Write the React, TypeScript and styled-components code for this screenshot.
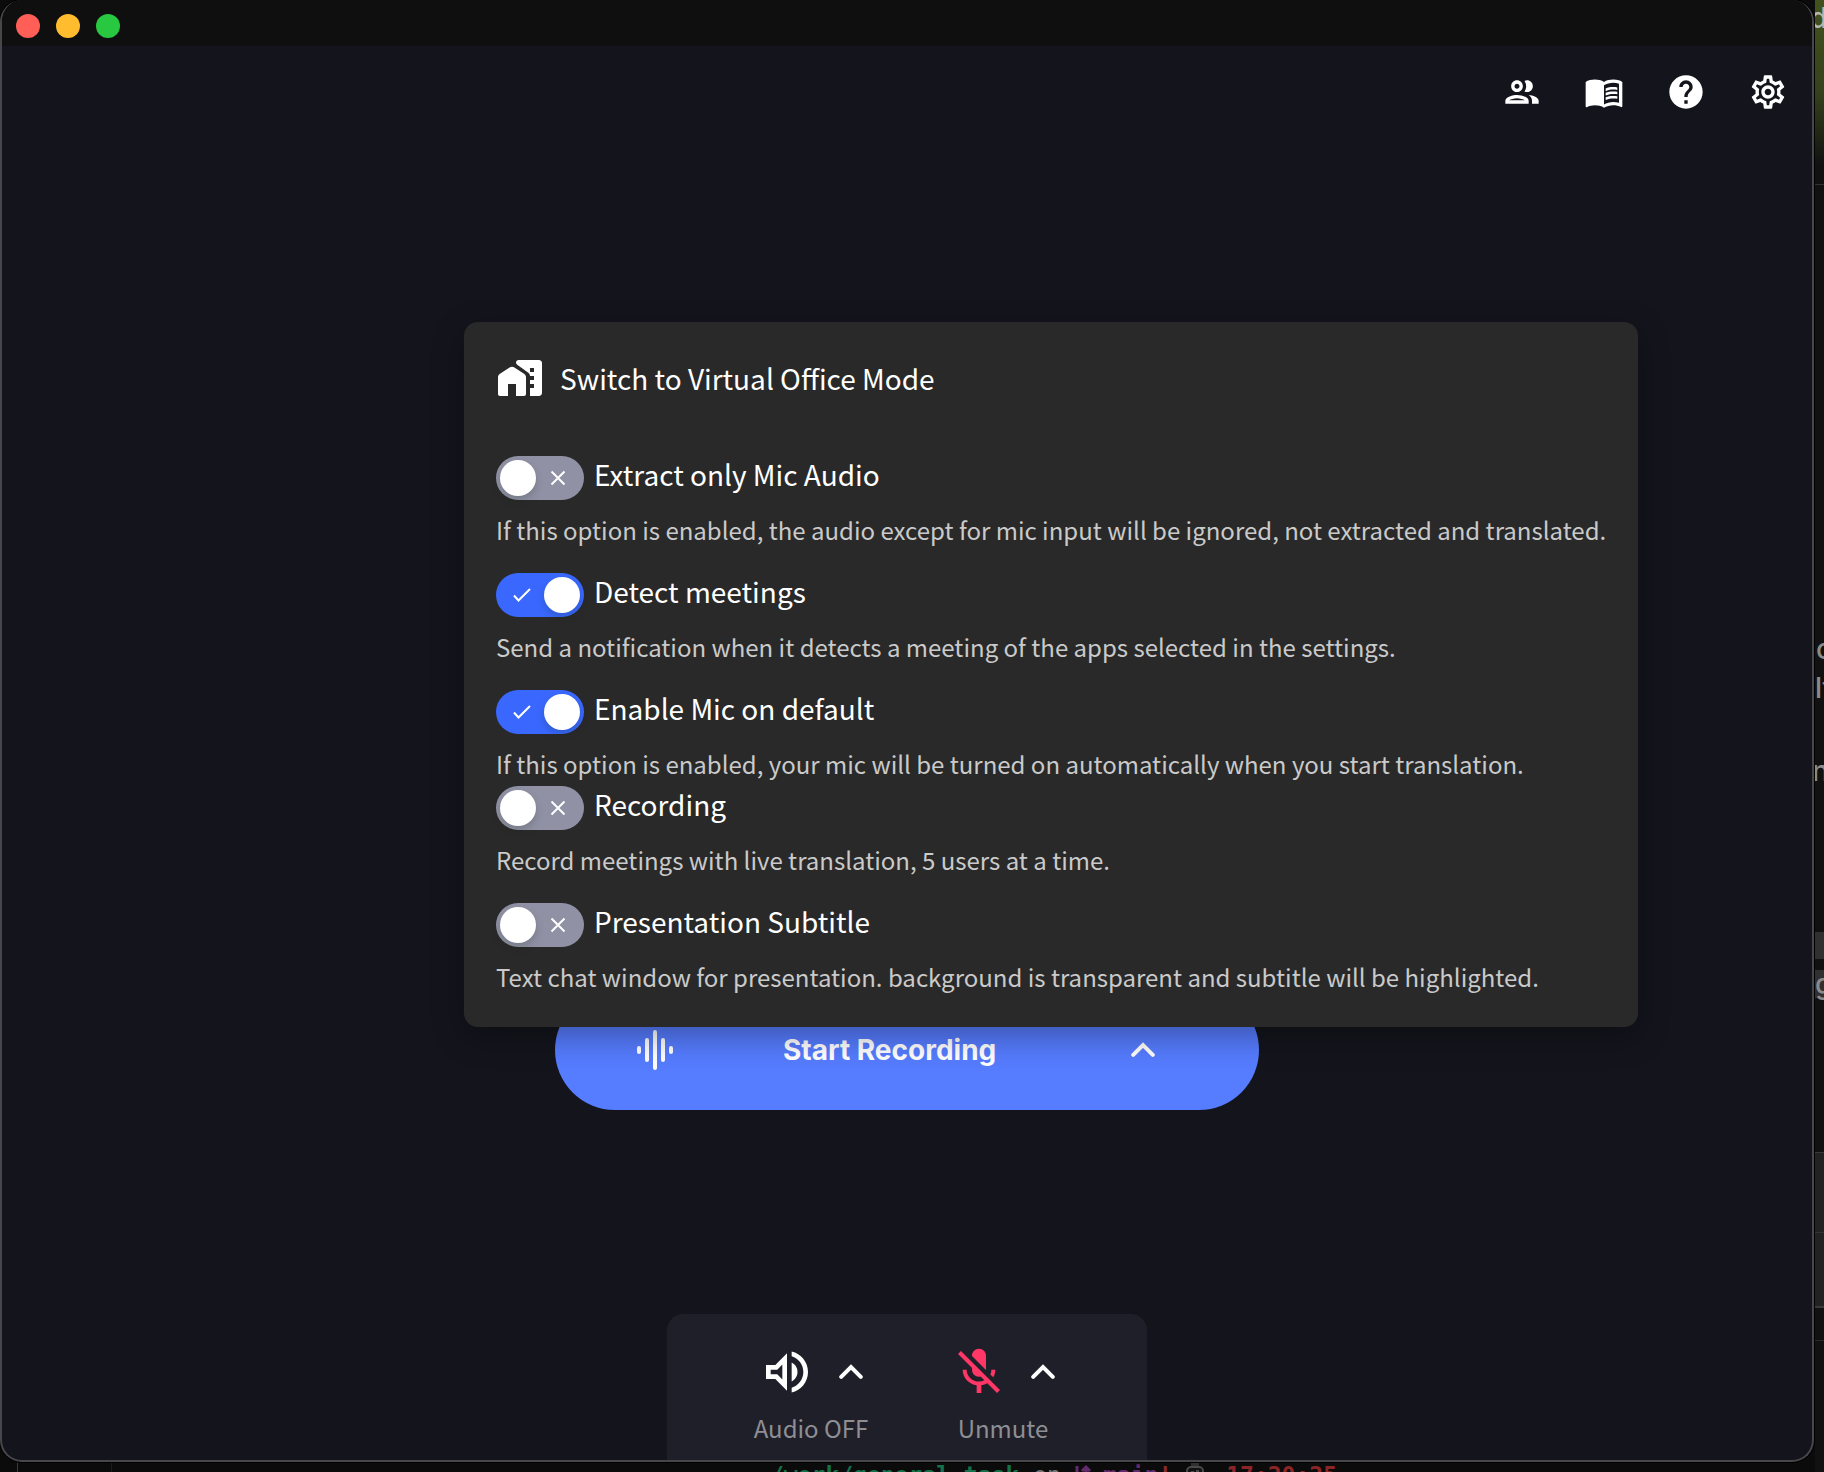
import React, { useId, useState } from "react";
import styled, { createGlobalStyle } from "styled-components";
import {
  MdHelp,
  MdMicOff,
  MdOutlineGroup,
  MdOutlineMenuBook,
  MdOutlineSettings,
  MdOutlineVolumeUp,
} from "react-icons/md";

const color = {
  titleBar: "#0f0f0f",
  window: "#14141d",
  edge: "#47474b",
  popover: "#292929",
  dock: "#1f1f29",
  accent: "#3a68ff",
  record: "#567cff",
  off: "#9191a5",
  danger: "#ff3767",
  muted: "#8e8e93",
  description: "#cacaca",
};

const GlobalStyle = createGlobalStyle`
  *, *::before, *::after { box-sizing: border-box; }
  body {
    margin: 0;
    background: #0b0b0b;
    color: #fff;
    font-family: "Noto Sans CJK JP", "Noto Sans", sans-serif;
  }
  button {
    padding: 0;
    border: 0;
    background: none;
    color: inherit;
    font: inherit;
    cursor: pointer;
  }
  svg { display: block; flex: none; }
`;

const Desktop = styled.div`
  position: relative;
  height: 100vh;
  padding: 0 10px 10px 0;
  overflow: hidden;
  background: #0b0b0b;
`;

/* ---- windows that peek out from behind the app ---- */

const SideWindow = styled.div`
  position: absolute;
  top: 0;
  right: 0;
  bottom: 0;
  width: 9px;
  overflow: hidden;
  background: #111;
  color: #8b8b8b;
  font: 500 28px/32px Inter, sans-serif;
`;

const Wallpaper = styled.div`
  height: 185px;
  background: linear-gradient(#42521f 0, #36421c 50%, #111 90%);
  border-bottom: 1px solid #333;
`;

const SideBlock = styled.div<{ $top: number; $height: number; $fill: string }>`
  position: absolute;
  top: ${(p) => p.$top}px;
  left: 0;
  width: 100%;
  height: ${(p) => p.$height}px;
  background: ${(p) => p.$fill};
`;

const SideText = styled.span<{ $top: number; $left: number; $tone?: string }>`
  position: absolute;
  top: ${(p) => p.$top}px;
  left: ${(p) => p.$left}px;
  color: ${(p) => p.$tone ?? "inherit"};
  white-space: nowrap;
`;

const Terminal = styled.div`
  position: absolute;
  left: 0;
  right: 9px;
  bottom: 0;
  height: 9px;
  overflow: hidden;
`;

const TerminalRule = styled.i<{ $left: number; $tone: string }>`
  position: absolute;
  top: 0;
  left: ${(p) => p.$left}px;
  width: 1px;
  height: 100%;
  background: ${(p) => p.$tone};
`;

const Prompt = styled.div`
  position: absolute;
  top: -2px;
  left: 770px;
  display: flex;
  gap: 14px;
  font: 700 23px/28px "DejaVu Sans Mono", monospace;
  white-space: pre;
`;

const PromptPart = styled.span<{ $tone: string; $light?: boolean }>`
  display: flex;
  color: ${(p) => p.$tone};
  font-weight: ${(p) => (p.$light ? 400 : 700)};
`;

/* ---- app window ---- */

const AppWindow = styled.main`
  position: relative;
  display: flex;
  flex-direction: column;
  height: 100%;
  overflow: hidden;
  background: ${color.window};
  border: 2px solid ${color.edge};
  border-top-width: 0;
  border-radius: 22px;
  box-shadow: 0 0 0 1px #000;
`;

const TitleBar = styled.header`
  display: flex;
  flex: none;
  gap: 16px;
  height: 46px;
  padding: 14px;
  background: ${color.titleBar};
`;

const TrafficLight = styled.button<{ $fill: string }>`
  width: 24px;
  height: 24px;
  border-radius: 50%;
  background: ${(p) => p.$fill};
`;

const Toolbar = styled.nav`
  display: flex;
  justify-content: flex-end;
  gap: 42px;
  padding: 26px 24px;
`;

const Stage = styled.section`
  display: flex;
  flex: 1;
  align-items: flex-end;
  justify-content: center;
  padding-bottom: 204px;
`;

const RecordButton = styled.button`
  display: flex;
  align-items: center;
  width: 704px;
  height: 120px;
  padding: 0 104px 0 76px;
  border-radius: 60px;
  background: ${color.record};
  font: 700 28px/36px Inter, sans-serif;

  span { margin-left: 104px; }
  svg:last-child { margin-left: auto; }
`;

const Dock = styled.footer`
  display: flex;
  flex: none;
  align-self: center;
  justify-content: center;
  gap: 72px;
  width: 480px;
  height: 146px;
  padding-top: 30px;
  border-radius: 16px 16px 0 0;
  background: ${color.dock};
`;

const DockItem = styled.div`
  display: flex;
  flex-direction: column;
  align-items: center;
  gap: 10px;
  width: 120px;
  color: ${color.muted};
  font-size: 24px;
  line-height: 36px;
  white-space: nowrap;
`;

const DockControls = styled.div`
  display: flex;
  align-items: center;
  gap: 24px;
  color: #fff;
`;

const DockButton = styled.button<{ $danger?: boolean }>`
  color: ${(p) => (p.$danger ? color.danger : "#fff")};
`;

/* ---- settings popover ---- */

const Popover = styled.section`
  position: absolute;
  top: 322px;
  left: 462px;
  padding: 32px;
  border-radius: 14px;
  background: ${color.popover};
  box-shadow: 0 10px 32px rgba(0, 0, 0, 0.32);
`;

const ModeButton = styled.button`
  display: flex;
  align-items: center;
  gap: 16px;
  font-size: 28px;
  line-height: 36px;
`;

const OptionList = styled.div`
  display: flex;
  flex-direction: column;
  gap: 4px;
  margin-top: 54px;
`;

const OptionGroup = styled.div`
  display: flex;
  flex-direction: column;
  gap: 25px;
`;

const Option = styled.div`
  display: flex;
  flex-direction: column;
  gap: 12px;
`;

const OptionLabel = styled.label`
  display: flex;
  align-items: flex-start;
  gap: 10px;
  font-size: 28px;
  line-height: 36px;
  cursor: pointer;
`;

const SwitchBox = styled.span`
  position: relative;
  display: flex;
`;

const SwitchInput = styled.input`
  display: flex;
  width: 88px;
  height: 44px;
  margin: 0;
  padding: 4px;
  appearance: none;
  border-radius: 22px;
  background: ${color.off};
  cursor: pointer;

  &::before {
    content: "";
    width: 36px;
    height: 36px;
    border-radius: 50%;
    background: #fff;
    box-shadow: 0 4px 8px rgba(0, 35, 11, 0.2);
  }

  &:checked { background: ${color.accent}; }
  &:checked::before { margin-left: auto; }
`;

const SwitchMark = styled.svg<{ $on: boolean }>`
  position: absolute;
  top: 10px;
  left: ${(p) => (p.$on ? 14 : 50)}px;
  width: 24px;
  height: 24px;
  fill: none;
  stroke: #fff;
  stroke-width: 2;
  pointer-events: none;
`;

const Description = styled.p`
  margin: 0;
  color: ${color.description};
  font-size: 24px;
  line-height: 36px;
  white-space: nowrap;
`;

/* ---- drawings ---- */

const WaveIcon = () => (
  <svg width="48" height="48" viewBox="0 0 24 24" stroke="currentColor" strokeWidth="2" strokeLinecap="round">
    <path d="M4 11v2M8 7v10M12 3v18M16 7v10M20 11v2" />
  </svg>
);

const ChevronUp = () => (
  <svg width="24" height="24" viewBox="6 6 12 12" fill="none" stroke="currentColor" strokeWidth="2" strokeLinecap="round">
    <path d="M7.1 14.4 12 9.5l4.9 4.9" />
  </svg>
);

const HomeWorkIcon = () => (
  <svg width="48" height="48" viewBox="0 0 24 24" fill="currentColor">
    <path d="M1 11.6c0-.6.3-1.2.8-1.6l5-3.2c.7-.5 1.7-.5 2.4 0l5 3.2c.5.4.8 1 .8 1.6V20c0 .6-.4 1-1 1h-4v-6H6v6H2c-.6 0-1-.4-1-1z" />
    <path d="M21.5 3H11.3C10.6 3 10 3.6 10 4.3c0 .4.2.8.6 1.1l5.4 3.9c.6.4 1 1 1 1.7h2v2h-2v2h2v2h-2v4h4.5c.8 0 1.5-.7 1.5-1.5v-15c0-.8-.7-1.5-1.5-1.5zM19 9h-2V7h2z" />
  </svg>
);

const BranchIcon = () => (
  <svg width="28" height="28" viewBox="0 0 28 28" fill="none" stroke="currentColor" strokeWidth="3">
    <path d="M2 5v18M11 24V8M7 10l4-4 4 4" />
  </svg>
);

const WatchIcon = () => (
  <svg width="26" height="28" viewBox="0 0 26 28" fill="currentColor">
    <path d="M5 2h8v5H5z" opacity=".6" />
    <rect x="1" y="6" width="16" height="18" rx="4" fill="#111" stroke="currentColor" strokeWidth="2" />
    <path d="M5 10h3v2H5zM10 9h3v3h-3z" />
  </svg>
);

/* ---- data ---- */

type OptionData = { title: string; text: string; on: boolean };

const groups: OptionData[][] = [
  [
    {
      title: "Extract only Mic Audio",
      text: "If this option is enabled, the audio except for mic input will be ignored, not extracted and translated.",
      on: false,
    },
    {
      title: "Detect meetings",
      text: "Send a notification when it detects a meeting of the apps selected in the settings.",
      on: true,
    },
    {
      title: "Enable Mic on default",
      text: "If this option is enabled, your mic will be turned on automatically when you start translation.",
      on: true,
    },
  ],
  [
    { title: "Recording", text: "Record meetings with live translation, 5 users at a time.", on: false },
    {
      title: "Presentation Subtitle",
      text: "Text chat window for presentation. background is transparent and subtitle will be highlighted.",
      on: false,
    },
  ],
];

const lights = [
  { name: "Close", fill: "#ff5f57" },
  { name: "Minimize", fill: "#febc2e" },
  { name: "Zoom", fill: "#28c840" },
];

const tools = [
  { name: "Members", Icon: MdOutlineGroup },
  { name: "Guide", Icon: MdOutlineMenuBook },
  { name: "Help", Icon: MdHelp },
  { name: "Settings", Icon: MdOutlineSettings },
];

function OptionRow({ title, text, on }: OptionData) {
  const id = useId();
  const [checked, setChecked] = useState(on);
  return (
    <Option>
      <OptionLabel htmlFor={id}>
        <SwitchBox>
          <SwitchInput
            id={id}
            type="checkbox"
            role="switch"
            checked={checked}
            onChange={(e) => setChecked(e.target.checked)}
          />
          <SwitchMark $on={checked} viewBox="0 0 24 24" aria-hidden="true">
            <path d={checked ? "M4 12.5l4.5 5L20 6" : "M5.5 5.5l13 13M18.5 5.5l-13 13"} />
          </SwitchMark>
        </SwitchBox>
        {title}
      </OptionLabel>
      <Description>{text}</Description>
    </Option>
  );
}

export default function App() {
  return (
    <>
      <GlobalStyle />
      <Desktop>
        <Terminal aria-hidden="true">
          <TerminalRule $left={17} $tone="#3a3a3a" />
          <TerminalRule $left={111} $tone="#1c1c1c" />
          <Prompt>
            <PromptPart $tone="#14714a">/work/general_task</PromptPart>
            <PromptPart $tone="#777" $light>on</PromptPart>
            <PromptPart $tone="#632a6d">
              <BranchIcon />
              main
              <PromptPart $tone="#8a2a2c">!</PromptPart>
            </PromptPart>
            <PromptPart $tone="#4a4a4a"><WatchIcon /></PromptPart>
            <PromptPart $tone="#8a2628">17:20:25</PromptPart>
          </Prompt>
        </Terminal>
        <SideWindow aria-hidden="true">
          <Wallpaper />
          <SideText $top={2} $left={-5} $tone="#b5b8ad">d</SideText>
          <SideText $top={633} $left={1}>c</SideText>
          <SideText $top={672} $left={0}>lt</SideText>
          <SideText $top={755} $left={-3}>n</SideText>
          <SideBlock $top={932} $height={27} $fill="#303030" />
          <SideBlock $top={970} $height={28} $fill="#303030" />
          <SideText $top={968} $left={0}>g</SideText>
          <SideBlock $top={1152} $height={155} $fill="#222" />
          <SideBlock $top={1152} $height={1} $fill="#3a3a3a" />
          <SideBlock $top={1232} $height={1} $fill="#333" />
          <SideBlock $top={1306} $height={2} $fill="#3a3a3a" />
          <SideBlock $top={1340} $height={1} $fill="#2a2a2a" />
        </SideWindow>

        <AppWindow>
          <TitleBar>
            {lights.map((l) => (
              <TrafficLight key={l.name} $fill={l.fill} aria-label={l.name} />
            ))}
          </TitleBar>
          <Toolbar>
            {tools.map(({ name, Icon }) => (
              <button key={name} aria-label={name}>
                <Icon size={40} />
              </button>
            ))}
          </Toolbar>
          <Stage>
            <RecordButton>
              <WaveIcon />
              <span>Start Recording</span>
              <ChevronUp />
            </RecordButton>
          </Stage>
          <Dock>
            <DockItem>
              <DockControls>
                <DockButton aria-label="Toggle audio"><MdOutlineVolumeUp size={56} /></DockButton>
                <DockButton aria-label="Audio options"><ChevronUp /></DockButton>
              </DockControls>
              Audio OFF
            </DockItem>
            <DockItem>
              <DockControls>
                <DockButton $danger aria-label="Toggle microphone"><MdMicOff size={56} /></DockButton>
                <DockButton aria-label="Microphone options"><ChevronUp /></DockButton>
              </DockControls>
              Unmute
            </DockItem>
          </Dock>

          <Popover>
            <ModeButton>
              <HomeWorkIcon />
              Switch to Virtual Office Mode
            </ModeButton>
            <OptionList>
              {groups.map((group, i) => (
                <OptionGroup key={i}>
                  {group.map((option) => (
                    <OptionRow key={option.title} {...option} />
                  ))}
                </OptionGroup>
              ))}
            </OptionList>
          </Popover>
        </AppWindow>
      </Desktop>
    </>
  );
}
